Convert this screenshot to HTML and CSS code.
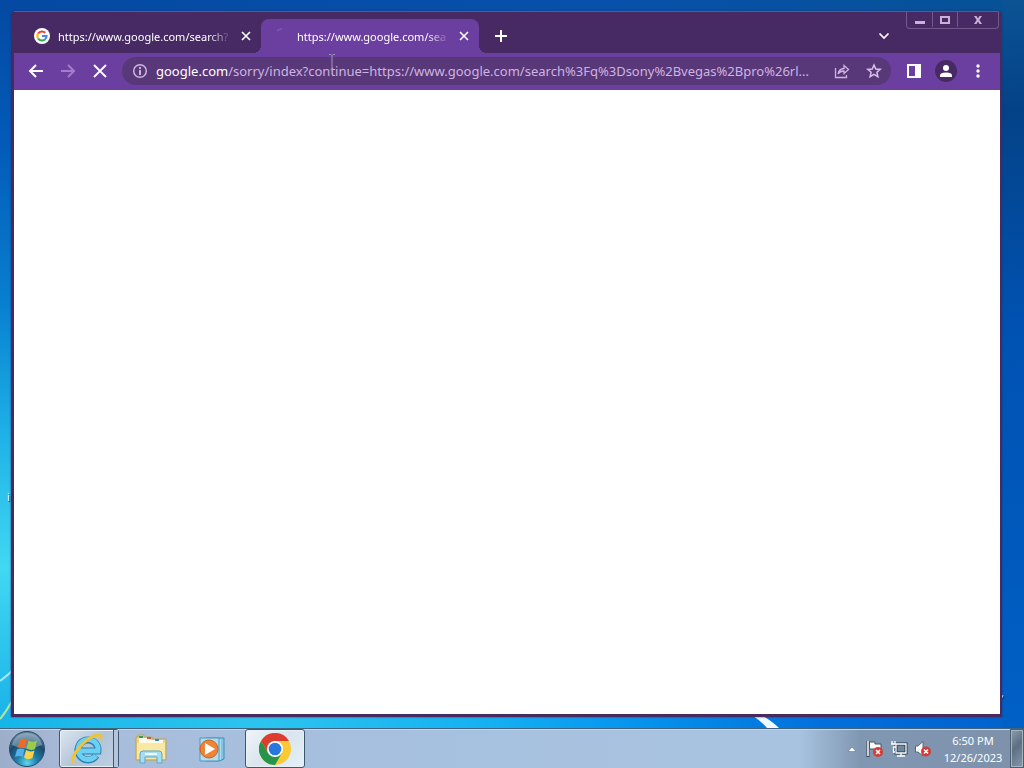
FILE: index.html
```html
<!DOCTYPE html>
<html lang="en">
<head>
	<meta charset="utf-8">
	<meta name="viewport" content="width=device-width, initial-scale=1.0">
	<title>Desktop</title>
	<link rel="stylesheet" href="styles.css">
</head>
<body>
	<main class="desktop">
		<svg class="streak-left" viewBox="0 0 24 60" aria-hidden="true">
			<path d="M0 13 Q7 8 14 1" stroke="#a9e6fa" stroke-width="2" fill="none"/>
			<path d="M0 51 Q6 44 12 33" stroke="#b5e4a0" stroke-width="2" fill="none"/>
		</svg>
		<svg class="streak-right" viewBox="0 0 40 12" aria-hidden="true">
			<path d="M5 0 H15 Q25 6 31 12 H19 Q13 5 5 0Z" fill="#eefaff"/>
		</svg>
		<span class="icon-label label-left">i</span>
		<span class="icon-label label-right">,</span>

		<section class="window">
			<header class="titlebar">
				<div class="tab">
					<svg class="favicon" viewBox="0 0 16 16" aria-hidden="true">
						<circle cx="8" cy="8" r="8" fill="#fff"/>
						<g fill="none" stroke-width="2">
							<path d="M4.2 5.4 A4.6 4.6 0 0 1 11.3 4.8" stroke="#ea4335"/>
							<path d="M4.2 5.4 A4.6 4.6 0 0 0 4.2 10.6" stroke="#fbbc05"/>
							<path d="M4.2 10.6 A4.6 4.6 0 0 0 10.9 11.5" stroke="#34a853"/>
							<path d="M8 8 H12.6 A4.6 4.6 0 0 1 10.9 11.5" stroke="#4285f4"/>
						</g>
					</svg>
					<span class="tab-title">https://www.google.com/search?</span>
					<button class="tab-close" type="button" aria-label="Close tab">
						<svg width="10" height="10" viewBox="0 0 10 10"><path d="M1 1 L9 9 M9 1 L1 9" stroke="#fff" stroke-width="1.600"/></svg>
					</button>
				</div>
				<div class="tab tab-active">
					<svg class="favicon" viewBox="0 0 16 16" aria-hidden="true">
						<path d="M4 3 Q6 1 9 1" stroke="#8750b5" stroke-width="1.500" fill="none"/>
					</svg>
					<span class="tab-title">https://www.google.com/sea</span>
					<button class="tab-close" type="button" aria-label="Close tab">
						<svg width="10" height="10" viewBox="0 0 10 10"><path d="M1 1 L9 9 M9 1 L1 9" stroke="#fff" stroke-width="1.600"/></svg>
					</button>
				</div>
				<button class="new-tab" type="button" aria-label="New tab">
					<svg width="12" height="12" viewBox="0 0 12 12"><path d="M6 0 V12 M0 6 H12" stroke="#fff" stroke-width="2"/></svg>
				</button>
				<button class="tab-search" type="button" aria-label="Search tabs">
					<svg width="12" height="8" viewBox="0 0 12 8"><path d="M1.5 1.5 L6 6 L10.5 1.5" stroke="#fff" stroke-width="1.700" fill="none"/></svg>
				</button>
				<div class="window-buttons">
					<button class="minimize" type="button" aria-label="Minimize">
						<svg width="12" height="10" viewBox="0 0 12 10"><path d="M1 6 H11 V9 H1Z" fill="#cbb0da"/></svg>
					</button>
					<button class="maximize" type="button" aria-label="Maximize">
						<svg width="12" height="10" viewBox="0 0 12 10"><path d="M2 2 H10 V8 H2Z" stroke="#cbb0da" stroke-width="2" fill="none"/></svg>
					</button>
					<button class="close" type="button" aria-label="Close">
						<svg width="10" height="10" viewBox="0 0 10 10"><path d="M1 1 H3.5 L5 3.5 L6.5 1 H9 L6.3 5 L9 9 H6.5 L5 6.5 L3.5 9 H1 L3.7 5Z" fill="#cbb0da"/></svg>
					</button>
				</div>
			</header>

			<nav class="toolbar">
				<button class="tool" type="button" aria-label="Back">
					<svg width="16" height="16" viewBox="0 0 16 16"><path d="M15 8 H2 M8 2 L2 8 L8 14" stroke="#fff" stroke-width="2" fill="none"/></svg>
				</button>
				<button class="tool" type="button" aria-label="Forward">
					<svg width="16" height="16" viewBox="0 0 16 16"><path d="M1 8 H14 M8 2 L14 8 L8 14" stroke="#a57bcb" stroke-width="2" fill="none"/></svg>
				</button>
				<button class="tool" type="button" aria-label="Stop">
					<svg width="16" height="16" viewBox="0 0 16 16"><path d="M2 2 L14 14 M14 2 L2 14" stroke="#fff" stroke-width="1.800"/></svg>
				</button>
				<div class="address">
					<svg width="16" height="16" viewBox="0 0 16 16" aria-hidden="true">
						<circle cx="8" cy="8" r="6.300" stroke="#cdb4e0" stroke-width="1.500" fill="none"/>
						<path d="M7 4 H9 V6 H7Z M7 7 H9 V12 H7Z" fill="#cdb4e0"/>
					</svg>
					<label for="url">google.com</label>
					<input id="url" type="text" value="/sorry/index?continue=https://www.google.com/search%3Fq%3Dsony%2Bvegas%2Bpro%26rl...">
					<button type="button" aria-label="Share">
						<svg width="16" height="16" viewBox="0 0 16 16"><path d="M1.500 5 V14.500 H12.500 V12 M4 11 Q5 6 10 5.500 V2.500 L14.500 6.500 L10 10.500 V8 Q6 8 4 11Z" stroke="#cdb4e0" stroke-width="1.3" fill="none"/></svg>
					</button>
					<button type="button" aria-label="Bookmark this tab">
						<svg width="16" height="16" viewBox="0 0 16 16"><path d="M8 2 L9.8 6 L14.2 6.4 L10.9 9.3 L11.9 13.6 L8 11.3 L4.1 13.6 L5.1 9.3 L1.8 6.4 L6.2 6Z" stroke="#d8c2e8" stroke-width="1.5" fill="none"/></svg>
					</button>
				</div>
				<button class="tool" type="button" aria-label="Side panel">
					<svg width="16" height="16" viewBox="0 0 16 16"><path d="M1 1 H15 V15 H1Z M3 3 V13 H9 V3Z" fill="#fff" fill-rule="evenodd"/></svg>
				</button>
				<button class="tool" type="button" aria-label="Profile">
					<svg width="22" height="22" viewBox="0 0 22 22"><circle cx="11" cy="11" r="11" fill="#472a64"/><circle cx="11" cy="8" r="3" fill="#fff"/><path d="M5 17 V15.5 Q5 12.5 11 12.5 Q17 12.5 17 15.5 V17Z" fill="#fff"/></svg>
				</button>
				<button class="tool" type="button" aria-label="Menu">
					<svg width="16" height="16" viewBox="0 0 16 16"><g fill="#fff"><circle cx="8" cy="3" r="1.7"/><circle cx="8" cy="8" r="1.7"/><circle cx="8" cy="13" r="1.7"/></g></svg>
				</button>
			</nav>
			<div class="page"></div>
			<svg class="cursor" width="8" height="22" viewBox="0 0 8 22" aria-hidden="true"><path d="M1 .5 H3 L4 1.5 L5 .5 H7 M4 1.5 V20" stroke="#a694b4" fill="none"/></svg>
		</section>
	</main>

	<footer class="taskbar">
		<button class="start" type="button" aria-label="Start">
			<svg width="38" height="38" viewBox="0 0 38 38">
				<defs>
					<radialGradient id="orb" cx="50%" cy="90%" r="85%">
						<stop offset="0" stop-color="#5fd6ee"/>
						<stop offset=".35" stop-color="#1c7fa8"/>
						<stop offset=".7" stop-color="#1b4a6c"/>
						<stop offset="1" stop-color="#62869f"/>
					</radialGradient>
				</defs>
				<circle cx="19" cy="19" r="17.5" fill="url(#orb)" stroke="#2b4866"/>
				<path d="M4 15 Q7 3 19 3 Q31 3 34 15 Q19 22 4 15Z" fill="#c5dce8" opacity=".4"/>
				<path d="M12 10 Q16 7 19 10 L17 18 Q13 16 9.500 18Z" fill="#ec6a2c"/>
				<path d="M20.500 10.500 Q25 13 29 10.500 L27 19 Q23 21 18.500 18.500Z" fill="#9ccb48"/>
				<path d="M9 19.500 Q13 17.500 16.500 19.500 L14.500 27 Q11 25 7 27Z" fill="#58aee6"/>
				<path d="M18 20 Q22 22.500 26.500 20.500 L24.500 28 Q20 30.500 16 27.500Z" fill="#fbd04a"/>
			</svg>
		</button>
		<button class="task task-stack" type="button" aria-label="Internet Explorer">
			<svg width="32" height="32" viewBox="0 0 32 32">
				<path d="M9 18 H27 A10 10 0 1 0 25.300 22.600" fill="none" stroke="#2a7fb5" stroke-width="7"/>
				<path d="M9 18 H27 A10 10 0 1 0 25 22.600" fill="none" stroke="#6bd0f2" stroke-width="5"/>
				<path d="M3 30 Q-1 26 8 15 Q20 1 29 2 Q31 3 29 7" fill="none" stroke="#f0c332" stroke-width="3"/>
			</svg>
			<span class="stack-edge"></span>
		</button>
		<button class="task plain" type="button" aria-label="File Explorer">
			<svg width="32" height="32" viewBox="0 0 32 32">
				<path d="M1 4 H3 V2 H9 V4 H17 V6 H31 V27 H1Z" fill="#ecd582" stroke="#bda451"/>
				<path d="M4 5 H15 V7 H28 V10 H4Z" fill="#fffbea"/>
				<path d="M4 3 H8 V5 H4Z" fill="#369c52"/><path d="M12 4 H16 V6 H12Z" fill="#cf593b"/><path d="M20 6 H24 V8 H20Z" fill="#3e83c5"/>
				<path d="M2 10 H30 V26 H2Z" fill="#f8e8a4"/>
				<path d="M5 30 V21 Q5 18 8 18 H24 Q27 18 27 21 V30 H22 V24 H10 V30Z" fill="#a8dcef" stroke="#5ca6c9"/>
				<path d="M10 21 H22" stroke="#e9faff" stroke-width="2"/>
			</svg>
		</button>
		<button class="task plain media" type="button" aria-label="Media Player">
			<svg width="32" height="32" viewBox="0 0 32 32">
				<path d="M11 5 H29 V26 L24 28 H11Z" fill="#83c4e2" stroke="#3f8fb8"/>
				<path d="M25 6 V27 M22 5 V28" stroke="#d8f1fb"/>
				<path d="M5 5 H24 V28 H5Z" fill="#b3dcee" stroke="#4b98bd"/>
				<circle cx="14" cy="16" r="9" fill="#ee8434" stroke="#cb6120"/>
				<path d="M10 10 L20 16 L10 22Z" fill="#fff"/>
			</svg>
		</button>
		<button class="task chrome" type="button" aria-label="Google Chrome">
			<svg width="32" height="32" viewBox="0 0 32 32">
				<circle cx="16" cy="16" r="16" fill="#fbc934"/>
				<path d="M2.100 8 A16 16 0 0 1 29.900 8 H16 L9.100 20Z" fill="#dc3d2e"/>
				<path d="M2.100 8 A16 16 0 0 0 16 32 L22.900 20 L16 24 L9.100 20Z" fill="#27944a"/>
				<circle cx="16" cy="16" r="8" fill="#fff"/>
				<circle cx="16" cy="16" r="6.300" fill="#2877e0"/>
			</svg>
		</button>

		<div class="tray">
			<button type="button" aria-label="Show hidden icons">
				<svg width="16" height="16" viewBox="0 0 16 16"><path d="M4 10.500 L8 6 L12 10.500Z" fill="#fff" stroke="#56687d" stroke-width=".5"/></svg>
			</button>
			<button type="button" aria-label="Action Center">
				<svg width="18" height="18" viewBox="0 0 18 18"><path d="M2 1 V17" stroke="#374555" stroke-width="3"/><path d="M2 1 V16" stroke="#fff" stroke-width="1.500"/><path d="M3.500 2 H9 V4 H15 V11 H9 V9 H3.500Z" fill="#fff" stroke="#435469"/><circle cx="12" cy="12" r="5" fill="#d83a32"/><path d="M10 10 L14 14 M14 10 L10 14" stroke="#fff" stroke-width="1.500"/></svg>
			</button>
			<button type="button" aria-label="Network">
				<svg width="18" height="18" viewBox="0 0 18 18"><path d="M6 4 H16 V13 H6Z" fill="#71879d" stroke="#26394c" stroke-width="3"/><path d="M6 4 H16 V13 H6Z M11 13 V16 M7 16 H15 M2 1 V4 M5 1 V4 M1 4 H6 V7 H3.500 V12 H5" fill="none" stroke="#fff" stroke-width="1.300"/></svg>
			</button>
			<button type="button" aria-label="Volume">
				<svg width="18" height="18" viewBox="0 0 18 18"><path d="M1.500 6 H4 L9 1.500 V16 L4 12 H1.500Z" fill="#fff" stroke="#56687d"/><circle cx="12" cy="11.500" r="5" fill="#d83a32"/><path d="M10 9.500 L14 13.500 M14 9.500 L10 13.500" stroke="#fff" stroke-width="1.500"/></svg>
			</button>
		</div>
		<time class="clock" datetime="2023-12-26T18:50"><span>6:50 PM</span><span>12/26/2023</span></time>
		<button class="show-desktop" type="button" aria-label="Show desktop"></button>
	</footer>
</body>
</html>
```
FILE: styles.css
```css
* {
	box-sizing: border-box;
}
body {
	margin: 0;
	height: 100vh;
	display: flex;
	flex-direction: column;
	font-family: "Noto Sans", "Open Sans", sans-serif;
	font-size: 11px;
	overflow: hidden;
}
button {
	display: flex;
	align-items: center;
	justify-content: center;
	flex: none;
	padding: 0;
	border: 0;
	background: none;
}
svg {
	display: block;
	flex: none;
}

/* desktop */
.desktop {
	position: relative;
	flex: 1;
	display: flex;
	min-height: 0;
	padding: 11px 22px 11px 11px;
	background:
		linear-gradient(to bottom, #0b5394, #044287 15%, #0052b2 45%, #0060c6) right / 22px 100% no-repeat,
		linear-gradient(to right, #16b5e9, #2cc4ef 25%, #15b0f2 48%, #0594ee 62%, #0270dc 80%, #0060cd) bottom / 100% 11px no-repeat,
		linear-gradient(to right, #0449a2, #0751ab 60%, #075196) top / 100% 11px no-repeat,
		linear-gradient(to bottom, #0449a2, #035bb9 20%, #0880d1 42%, #1fb2e8 60%, #42d7f2 78%, #18b1e8);
}
.streak-left {
	position: absolute;
	left: 0;
	bottom: 0;
	width: 24px;
	height: 60px;
}
.streak-right {
	position: absolute;
	left: 73%;
	bottom: 0;
	width: 40px;
	height: 12px;
}
.icon-label {
	position: absolute;
	color: #fff;
	text-shadow: 1px 1px 1px #123;
}
.label-left {
	left: 7px;
	top: 489px;
}
.label-right {
	right: 20px;
	bottom: 28px;
}

/* browser window */
.window {
	position: relative;
	flex: 1;
	display: flex;
	flex-direction: column;
	min-width: 0;
	border: 3px solid #472a60;
	border-top: 1px solid #675480;
	border-right-width: 2px;
	border-radius: 5px 5px 0 0;
	background: #472a64;
	box-shadow: 0 0 2px #26316a;
}
.titlebar {
	display: flex;
	align-items: flex-end;
	height: 41px;
	padding-left: 8px;
}
.tab {
	position: relative;
	display: flex;
	align-items: center;
	width: 239px;
	height: 34px;
	padding: 0 7px 0 12px;
	color: #fff;
}
.tab-active {
	width: 218px;
	border-radius: 8px 8px 0 0;
	background: #6b3fa0;
}
.tab-active::before,
.tab-active::after {
	content: "";
	position: absolute;
	bottom: 0;
	width: 8px;
	height: 8px;
}
.tab-active::before {
	left: -8px;
	background: radial-gradient(circle at 0 0, transparent 8px, #6b3fa0 8px);
}
.tab-active::after {
	right: -8px;
	background: radial-gradient(circle at 100% 0, transparent 8px, #6b3fa0 8px);
}
.favicon {
	width: 16px;
	height: 16px;
}
.tab-title {
	flex: 1;
	min-width: 0;
	margin: 0 6px 0 8px;
	overflow: hidden;
	white-space: nowrap;
	-webkit-mask-image: linear-gradient(to left, transparent, #000 24px);
	mask-image: linear-gradient(to left, transparent, #000 24px);
}
.tab-close {
	width: 16px;
	height: 16px;
}
.new-tab {
	width: 28px;
	height: 34px;
	margin-left: 8px;
}
.tab-search {
	width: 28px;
	height: 34px;
	margin-left: auto;
}
.window-buttons {
	display: flex;
	align-self: flex-start;
	height: 17px;
	margin: 0 1px 0 8px;
	border: 1px solid #74588b;
	border-top: 0;
	border-radius: 0 0 4px 4px;
}
.window-buttons button {
	height: 15px;
	width: 25px;
}
.window-buttons button + button {
	border-left: 1px solid #74588b;
}
.window-buttons .close {
	width: 41px;
}

/* toolbar */
.toolbar {
	display: flex;
	align-items: center;
	gap: 4px;
	height: 37px;
	padding: 0 8px 1px;
	background: #6b3fa0;
}
.tool {
	width: 28px;
	height: 28px;
}
.address {
	flex: 1;
	display: flex;
	align-items: center;
	min-width: 0;
	height: 28px;
	margin: 0 5px 0 4px;
	padding: 0 1px 0 10px;
	border-radius: 14px;
	background: #593879;
	font-size: 13px;
	color: #cdb4e0;
}
.address label {
	margin-left: 8px;
	color: #fff;
}
.address input {
	flex: 1;
	min-width: 0;
	height: 24px;
	padding: 0;
	border: 0;
	outline: 0;
	background: none;
	font: inherit;
	color: inherit;
}
.address button {
	width: 32px;
	height: 28px;
}
.page {
	flex: 1;
	background: #fff;
}
.cursor {
	position: absolute;
	left: 314px;
	top: 42px;
}

/* taskbar */
.taskbar {
	display: flex;
	align-items: center;
	flex: none;
	height: 40px;
	border-top: 1px solid #40637e;
	background: linear-gradient(to right, #9daecb, #a9bcda 8%, #a6bfdf 30%, #a8c3e0 78%, #8097b2 84%, #7e91ab);
	box-shadow: inset 0 1px #c3d7e8;
}
.start {
	width: 38px;
	margin: 0 13px 0 8px;
}
.task {
	width: 54px;
	height: 39px;
	border: 1px solid #3f566f;
	border-radius: 3px;
	background: linear-gradient(135deg, #dce6f0, #b2c4d9 50%, #bed0e3);
	box-shadow: inset 0 0 0 1px #e8f0f7;
}
.task-stack {
	width: 60px;
	justify-content: flex-end;
}
.stack-edge {
	width: 5px;
	height: 37px;
	margin-left: 10px;
	border-left: 1px solid #3f566f;
	background: #b4c5da;
}
.plain {
	width: 60px;
	margin-left: 2px;
	border: 0;
	background: none;
	box-shadow: none;
}
.media {
	margin-left: 0;
}
.chrome {
	width: 60px;
	margin-left: 4px;
	background: linear-gradient(135deg, #f0f4f8, #d9e4ee 50%, #e5f1f7);
}
.tray {
	display: flex;
	align-items: center;
	gap: 6px;
	margin-left: auto;
}
.clock {
	display: flex;
	flex-direction: column;
	align-items: center;
	width: 60px;
	margin: 0 7px 0 11px;
	line-height: 17px;
	color: #fff;
}
.show-desktop {
	width: 14px;
	height: 39px;
	border: 1px solid #4b5d70;
	background: linear-gradient(135deg, #8d9dad, #5c6f83 45%, #8798aa);
	box-shadow: inset 0 0 0 1px #a5b3c1;
}
```
